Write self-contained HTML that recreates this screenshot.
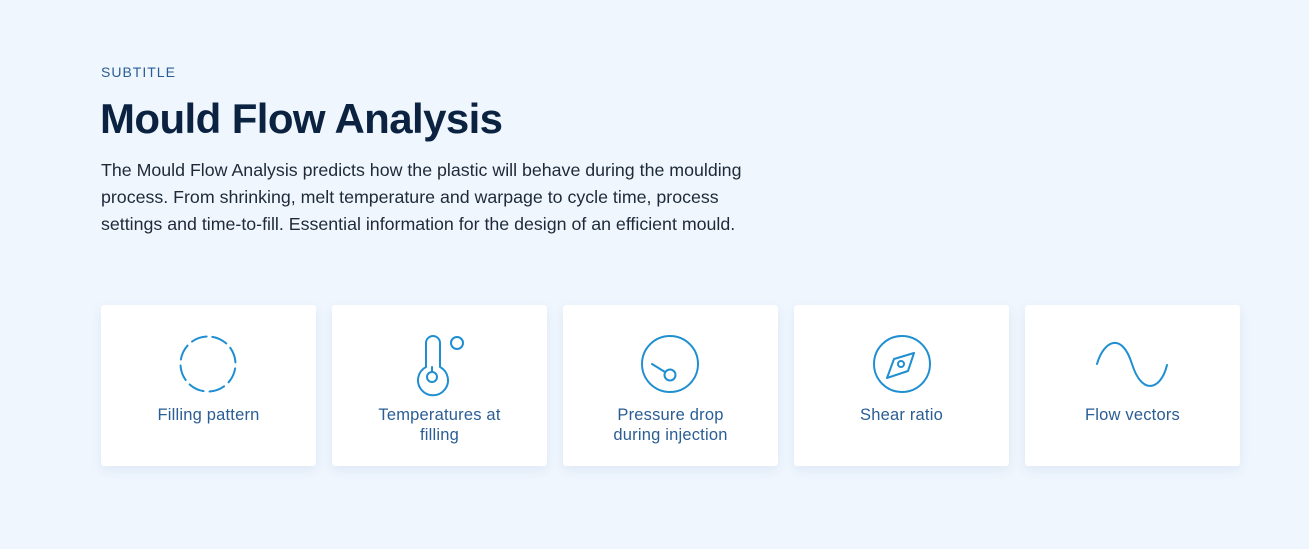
<!DOCTYPE html>
<html><head><style>
body{margin:0;width:1309px;height:549px;background:#eff6fe;font-family:"Liberation Sans",sans-serif;position:relative;overflow:hidden}
.sub{position:absolute;left:101px;top:64px;font-size:14px;letter-spacing:1px;color:#2a5d94;font-weight:bold;-webkit-text-stroke:0}
h1{position:absolute;left:100px;top:95px;margin:0;font-size:42px;font-weight:bold;color:#0b2340;letter-spacing:-0.6px}
p{position:absolute;left:101px;top:157px;margin:0;width:720px;font-size:17.8px;line-height:27px;color:#1e2a38;white-space:nowrap}
.card{position:absolute;top:305px;width:215px;height:161px;background:#fff;border-radius:3px;box-shadow:0 4px 12px rgba(30,60,110,0.08)}
.card span{position:absolute;top:100px;left:0;right:0;text-align:center;font-size:16.5px;line-height:20px;color:#2a5d94;letter-spacing:0.2px}
svg{position:absolute;left:0;top:0}
</style></head><body>
<div class="sub" style="font-weight:normal">SUBTITLE</div>
<h1>Mould Flow Analysis</h1>
<p>The Mould Flow Analysis predicts how the plastic will behave during the moulding<br>process. From shrinking, melt temperature and warpage to cycle time, process<br>settings and time-to-fill. Essential information for the design of an efficient mould.</p>
<div class="card" style="left:101px"><span>Filling pattern</span></div>
<div class="card" style="left:332px"><span>Temperatures at<br>filling</span></div>
<div class="card" style="left:563px"><span>Pressure drop<br>during injection</span></div>
<div class="card" style="left:794px"><span>Shear ratio</span></div>
<div class="card" style="left:1025px"><span>Flow vectors</span></div>
<svg width="1309" height="549" fill="none" stroke="#1f8fd1" stroke-width="2" stroke-linecap="round" stroke-linejoin="round">
<circle cx="208" cy="364" r="27.5" stroke-dasharray="15.6 6" transform="rotate(-81 208 364)"/>
<path d="M426 367 V343 a7 7 0 0 1 14 0 V367 a15 15 0 1 1 -14 0 Z"/>
<circle cx="432" cy="377" r="5"/><path d="M432 367 V372"/>
<circle cx="457" cy="343" r="6"/>
<circle cx="670" cy="364" r="28"/><circle cx="670" cy="375" r="5.5"/><path d="M652 364 L665 372"/>
<circle cx="902" cy="364" r="28"/>
<path d="M914 353 L894 359 L887 378 L908 371 Z"/><circle cx="901" cy="364" r="3"/>
<path d="M1097 364 C1104 340 1122 332 1132 364 C1142 396 1161 390 1167 365"/>
</svg>
</body></html>
